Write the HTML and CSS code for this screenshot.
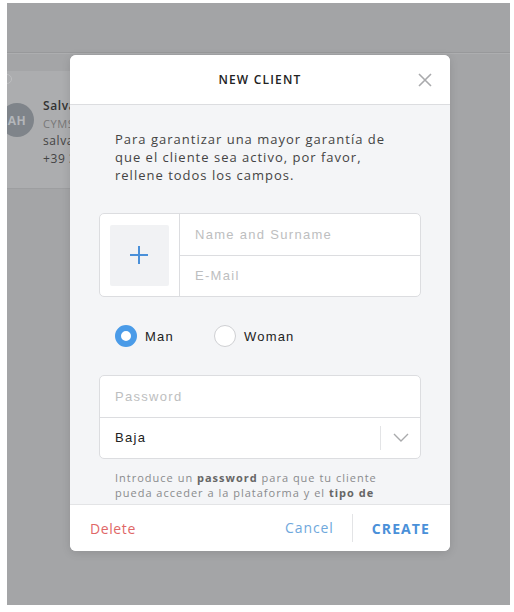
FILE: index.html
```html
<!DOCTYPE html>
<html>
<head>
<meta charset="utf-8">
<link rel="stylesheet" href="styles.css">
</head>
<body>
<div class="app">
  <div class="topbar"></div>
  <div class="content">
    <div class="bg-card">
      <div class="bg-dot"></div>
      <div class="avatar">AH</div>
      <div class="bg-info">
        <div class="bg-name">Salvatore</div>
        <div class="bg-company">CYMSA</div>
        <div class="bg-line">salvatore@mail.com</div>
        <div class="bg-line">+39 333 000</div>
      </div>
    </div>
  </div>

  <div class="modal">
    <div class="modal-header">
      <span class="modal-title">NEW CLIENT</span>
      <svg class="close" width="14" height="14" viewBox="0 0 14 14"><path d="M1 1L13 13M13 1L1 13" stroke="#a9aaac" stroke-width="1.6" fill="none"/></svg>
    </div>
    <div class="modal-body">
      <p class="intro">Para garantizar una mayor garantía de que el cliente sea activo, por favor, rellene todos los campos.</p>
      <div class="field-card">
        <div class="photo-cell">
          <div class="photo">
            <svg width="20" height="20" viewBox="0 0 20 20"><path d="M10 1V19M1 10H19" stroke="#4a90d9" stroke-width="2" fill="none"/></svg>
          </div>
        </div>
        <div class="fields">
          <div class="field placeholder">Name and Surname</div>
          <div class="field placeholder">E-Mail</div>
        </div>
      </div>
      <div class="radios">
        <div class="radio-item"><span class="radio checked"></span><span class="radio-label">Man</span></div>
        <div class="radio-item"><span class="radio"></span><span class="radio-label">Woman</span></div>
      </div>
      <div class="field-card stack">
        <div class="field placeholder pad">Password</div>
        <div class="field select pad">
          <span class="value">Baja</span>
          <span class="select-arrow">
            <svg width="16" height="9" viewBox="0 0 16 9"><path d="M1 1L8 8L15 1" stroke="#a9aaac" stroke-width="1.4" fill="none"/></svg>
          </span>
        </div>
      </div>
      <p class="help">Introduce un <b>password</b> para que tu cliente pueda acceder a la plataforma y el <b>tipo de usuario</b> que mejor se adapte.</p>
    </div>
    <div class="modal-footer">
      <span class="btn delete">Delete</span>
      <span class="spacer"></span>
      <span class="btn cancel">Cancel</span>
      <span class="btn create">CREATE</span>
    </div>
  </div>
</div>
</body>
</html>
```

FILE: styles.css
```css
* { box-sizing: border-box; }
html, body { margin: 0; padding: 0; background: #ffffff; }
body { font-family: "Open Sans", "Liberation Sans", sans-serif; }

.app {
  position: relative;
  margin: 3px 4px 0 7px;
  width: 503px;
  height: 602px;
  background: #a4a5a7;
  overflow: hidden;
}
.topbar {
  height: 50px;
  background: #a3a4a6;
  border-bottom: 1px solid #98999b;
  box-shadow: 0 1px 0 #adaeb0;
}
.content { padding-top: 18px; }
.bg-card {
  position: relative;
  height: 118px;
  width: 200px;
  background: #acadaf;
  border-bottom: 1px solid #9d9ea0;
  display: flex;
  align-items: flex-start;
  padding-top: 26px;
}
.bg-dot {
  position: absolute;
  left: -5px; top: 3px;
  width: 10px; height: 10px;
  border-radius: 50%;
  border: 1px solid #bdbec0;
}
.avatar {
  margin-left: -7px;
  width: 34px; height: 34px;
  border-radius: 50%;
  background: #7f848a;
  color: #b3b6ba;
  font-size: 12px;
  font-weight: 700;
  letter-spacing: 0.5px;
  display: flex; align-items: center; justify-content: center;
  margin-top: 6px;
  flex: none;
}
.bg-info { margin-left: 9px; font-size: 12px; line-height: 17.5px; letter-spacing: 0.6px; color: #444; }
.bg-name { font-weight: 600; color: #333; }
.bg-company { color: #777; font-size: 11px; }

.modal {
  position: absolute;
  left: 63px; top: 52px;
  width: 380px; height: 496px;
  background: #f4f5f7;
  border-radius: 6px;
  overflow: hidden;
  display: flex; flex-direction: column;
  box-shadow: 0 2px 10px rgba(0,0,0,0.12);
}
.modal-header {
  position: relative;
  height: 50px; flex: none;
  background: #fff;
  border-bottom: 1px solid #dcdde0;
  display: flex; align-items: center; justify-content: center;
}
.modal-title {
  font-size: 12px; font-weight: 600; letter-spacing: 1.2px; color: #222;
  margin-top: -1px;
}
.close { position: absolute; right: 18px; top: 18px; }

.modal-body {
  flex: 1; overflow: hidden;
  padding: 25px 29px 0 29px;
}
.intro {
  margin: 0; padding: 0 30px 0 16px;
  font-size: 13px; line-height: 18px; letter-spacing: 1px; color: #444;
}
.field-card {
  margin-top: 29px;
  height: 84px;
  background: #fff;
  border: 1px solid #dcdde0;
  border-radius: 5px;
  display: flex;
}
.photo-cell {
  width: 80px; flex: none;
  border-right: 1px solid #dcdde0;
  display: flex; align-items: center; justify-content: center;
  padding-right: 1px;
}
.photo {
  width: 59px; height: 61px;
  background: #f1f2f4;
  border-radius: 2px;
  display: flex; align-items: center; justify-content: center;
}
.fields { flex: 1; display: flex; flex-direction: column; }
.field {
  flex: 1;
  display: flex; align-items: center;
  padding-left: 15px;
  font-family: "Liberation Sans", Arial, sans-serif;
  font-size: 13px; letter-spacing: 1.3px;
}
.field + .field { border-top: 1px solid #dcdde0; }
.placeholder { color: #bdbec0; }

.radios {
  margin-top: 28px;
  padding-left: 16px;
  display: flex;
  height: 22px;
}
.radio-item { display: flex; align-items: center; width: 99px; }
.radio {
  width: 22px; height: 22px; border-radius: 50%;
  background: #fff; border: 1px solid #cfd0d3;
  flex: none;
}
.radio.checked { background: #fff; border: 6px solid #4a9be8; }
.radio-label {
  margin-left: 8px;
  font-family: "Liberation Sans", Arial, sans-serif;
  font-size: 13px; letter-spacing: 1.2px; color: #222;
}

.field-card.stack { flex-direction: column; margin-top: 28px; }
.pad { padding-left: 15px; }
.select .value { flex: 1; color: #222; }
.select-arrow {
  width: 40px; height: 24px;
  border-left: 1px solid #e3e4e6;
  display: flex; align-items: center; justify-content: center;
}

.help {
  margin: 11px 0 0 0; padding: 0 30px 0 16px;
  font-size: 11px; line-height: 15px; letter-spacing: 1px; color: #8a8b8d;
}
.help b { color: #666; font-weight: 700; }

.modal-footer {
  height: 47px; flex: none;
  background: #fff;
  border-top: 1px solid #e3e4e6;
  display: flex; align-items: center;
  padding: 0 20px;
}
.btn { font-size: 14px; letter-spacing: 0.6px; }
.delete { color: #e06767; }
.spacer { flex: 1; }
.cancel { color: #6fa8dc; padding-right: 18px; border-right: 1px solid #e3e4e6; line-height: 28px; letter-spacing: 0.9px; }
.create { color: #4a90d9; font-weight: 700; letter-spacing: 1.1px; padding-left: 19px; }
```
